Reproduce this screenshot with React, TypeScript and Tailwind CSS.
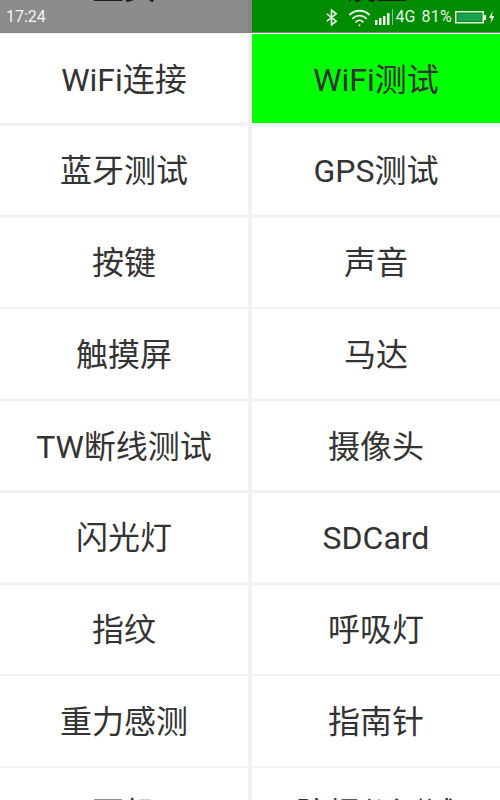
import { Wifi } from 'lucide-react';

const rows: [string, string][] = [
  ['主页', '设置'],
  ['WiFi连接', 'WiFi测试'],
  ['蓝牙测试', 'GPS测试'],
  ['按键', '声音'],
  ['触摸屏', '马达'],
  ['TW断线测试', '摄像头'],
  ['闪光灯', 'SDCard'],
  ['指纹', '呼吸灯'],
  ['重力感测', '指南针'],
  ['耳机', '陀螺仪测试'],
];

const Cell = ({ label, active }: { label: string; active?: boolean }) => (
  <div className={`flex items-center justify-center pt-[2px] ${active ? 'bg-[#00ff00]' : 'bg-white'}`}>{label}</div>
);

const StatusBar = () => (
  <div className="absolute top-0 left-0 right-0 h-[33px] bg-black/45 flex items-center justify-between pl-[6px] pr-[6px] pt-px text-white text-[16px] font-['Roboto',sans-serif]">
    <span className="opacity-90">17:24</span>
    <div className="flex items-center opacity-90">
      {/* bluetooth */}
      <svg width="12" height="17" viewBox="0 0 13 17" fill="none" stroke="white" strokeWidth="1.8" className="mr-[10px]">
        <path d="M1 4.5l10 8-5 4V.5l5 4-10 8" />
      </svg>
      <Wifi size={23} strokeWidth={2} className="mr-[4px]" />
      {/* signal */}
      <svg width="19" height="17" viewBox="0 0 19 17" fill="white" className="mr-[2px]">
        <rect x="0" y="11" width="2.5" height="5" />
        <rect x="4" y="9" width="2.5" height="7" />
        <rect x="8" y="7" width="2.5" height="9" />
        <rect x="12" y="4" width="2.5" height="12" />
        <rect x="17" y="0" width="1" height="16" opacity="0.6" />
      </svg>
      <span className="mr-[6px]">4G</span>
      <span className="mr-[3px] tracking-[0.3px]">81%</span>
      {/* battery */}
      <svg width="39" height="14" viewBox="0 0 39 14" fill="none">
        <rect x="0.75" y="1.75" width="27.5" height="11" stroke="white" strokeWidth="1.5" />
        <rect x="2.5" y="3.5" width="24" height="7.5" fill="#1ea35a" />
        <rect x="29" y="5" width="2" height="5" fill="white" />
        <path d="M37.5 1l-3.5 7h2.5l-1 5.5 4-7.5h-2.5z" fill="white" />
      </svg>
    </div>
  </div>
);

export default function App() {
  return (
    <div className="relative h-[800px] w-[500px] overflow-hidden bg-[#f1f1f1]">
      <div className="-mt-[57.75px] grid grid-cols-[248px_248px] justify-between auto-rows-[89.25px] gap-y-[2.5px] text-[32px] text-[#333333] font-['Roboto','Noto_Sans_CJK_SC',sans-serif]">
        {rows.map(([left, right]) => (
          <div key={left} className="contents">
            <Cell label={left} active={false} />
            <Cell label={right} active={right === 'WiFi测试' || right === '设置'} />
          </div>
        ))}
      </div>
      <StatusBar />
    </div>
  );
}
